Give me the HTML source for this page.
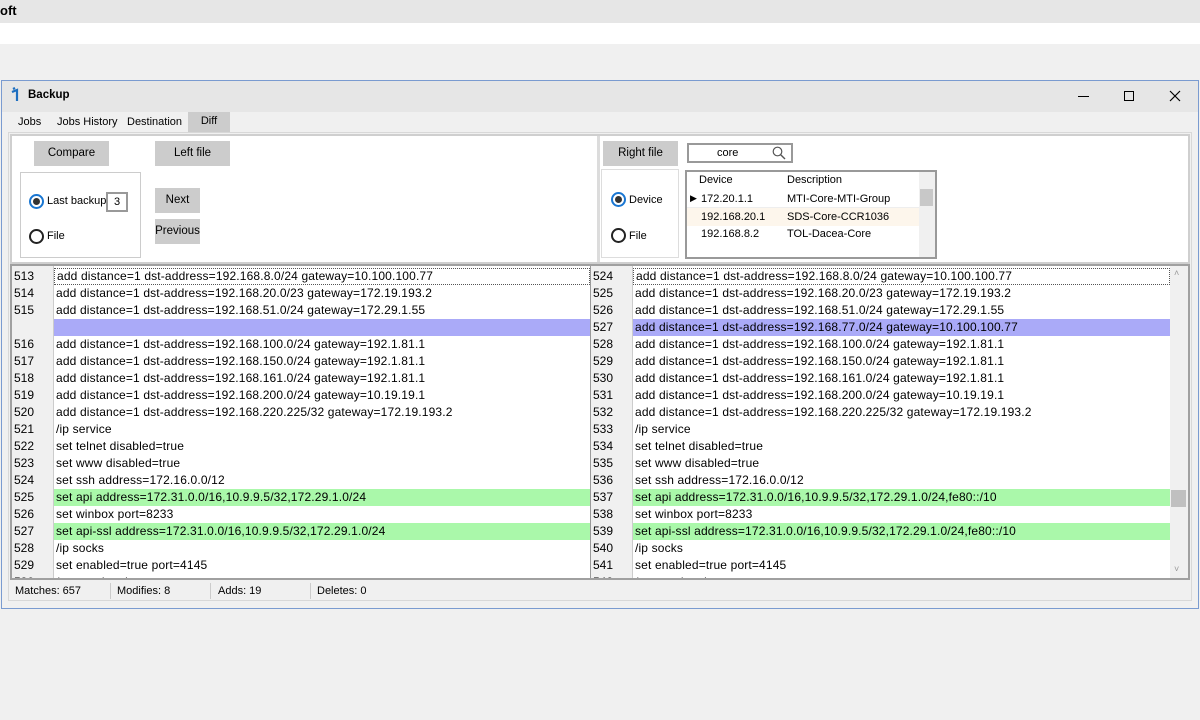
<!DOCTYPE html>
<html><head><meta charset="utf-8"><style>
*{margin:0;padding:0;box-sizing:border-box}
body{width:1200px;height:720px;background:#f0f0f0;font-family:"Liberation Sans",sans-serif;font-size:12px;color:#000;position:relative;overflow:hidden}
.a{position:absolute}
.btn{position:absolute;background:#cccccc;text-align:center;line-height:25px;font-size:11.5px}
.row{position:absolute;height:17px;line-height:17px;white-space:nowrap;letter-spacing:0.15px}
.num{position:absolute;left:0;width:40px;padding-left:2px;letter-spacing:0}
.txt{position:absolute;left:42px;padding-left:2px}
</style></head><body>
<div class="a" style="left:0;top:0;width:1200px;height:23px;background:#e6e6e6;font-weight:bold;font-size:13px;line-height:22px;padding-left:0">oft</div>
<div class="a" style="left:0;top:23px;width:1200px;height:21px;background:#fff"></div>

<div class="a" style="left:1px;top:80px;width:1198px;height:529px;border:1px solid #7a9bd0;background:#f0f0f0"></div>
<div class="a" style="left:2px;top:81px;width:1196px;height:31px;background:#e6e6e6"></div>
<svg class="a" style="left:10px;top:87px" width="14" height="16"><path d="M3 2l2-1M2 5l5-2v11" stroke="#1e6fc0" stroke-width="2.2" fill="none"/></svg>
<div class="a" style="left:28px;top:89px;font-weight:bold;font-size:11.5px">Backup</div>
<div class="a" style="left:1078px;top:96px;width:11px;height:1px;background:#000"></div>
<div class="a" style="left:1124px;top:91px;width:10px;height:10px;border:1px solid #000"></div>
<svg class="a" style="left:1169px;top:90px" width="12" height="12"><path d="M1 1L11 11M11 1L1 11" stroke="#000" stroke-width="1.2"/></svg>

<div class="a" style="left:18px;top:116px;font-size:11px">Jobs</div>
<div class="a" style="left:57px;top:116px;font-size:11px">Jobs History</div>
<div class="a" style="left:127px;top:116px;font-size:11px">Destination</div>
<div class="a" style="left:188px;top:112px;width:42px;height:20px;background:#cccccc;text-align:center;line-height:19px;font-size:11px">Diff</div>

<div class="a" style="left:8px;top:132px;width:1184px;height:469px;border:1px solid #d8d8d8;background:#f0f0f0"></div>
<div class="a" style="left:10px;top:134px;width:1180px;height:130px;border:2px solid #cfcfcf;background:#fff"></div>
<div class="a" style="left:597px;top:136px;width:3px;height:126px;background:#dcdcdc"></div>

<div class="btn" style="left:34px;top:141px;width:75px;height:25px">Compare</div>
<div class="btn" style="left:155px;top:141px;width:75px;height:25px">Left file</div>
<div class="a" style="left:20px;top:172px;width:121px;height:86px;border:1px solid #ccc"></div>
<div class="a" style="left:29px;top:194px;width:15px;height:15px;border:2px solid #1976d2;border-radius:50%"><div style="width:7px;height:7px;background:#333;border-radius:50%;margin:2px"></div></div>
<div class="a" style="left:47px;top:195px;font-size:11px">Last backup</div>
<div class="a" style="left:106px;top:192px;width:22px;height:20px;border:2px solid #999;text-align:center;line-height:16px;font-size:11px">3</div>
<div class="a" style="left:29px;top:229px;width:15px;height:15px;border:2px solid #222;border-radius:50%"></div>
<div class="a" style="left:47px;top:230px;font-size:11px">File</div>
<div class="btn" style="left:155px;top:188px;width:45px;height:25px">Next</div>
<div class="btn" style="left:155px;top:219px;width:45px;height:25px">Previous</div>

<div class="btn" style="left:603px;top:141px;width:75px;height:25px">Right file</div>
<div class="a" style="left:687px;top:143px;width:106px;height:20px;border:2px solid #999;background:#fff;line-height:16px;padding-left:28px;font-size:11px">core</div>
<svg class="a" style="left:772px;top:146px" width="14" height="14"><circle cx="5.5" cy="5.5" r="4.3" stroke="#555" stroke-width="1.2" fill="none"/><path d="M8.7 8.7L13 13" stroke="#555" stroke-width="1.4"/></svg>
<div class="a" style="left:601px;top:169px;width:78px;height:89px;border:1px solid #ddd"></div>
<div class="a" style="left:611px;top:192px;width:15px;height:15px;border:2px solid #1976d2;border-radius:50%"><div style="width:7px;height:7px;background:#333;border-radius:50%;margin:2px"></div></div>
<div class="a" style="left:629px;top:194px;font-size:11px">Device</div>
<div class="a" style="left:611px;top:228px;width:15px;height:15px;border:2px solid #222;border-radius:50%"></div>
<div class="a" style="left:629px;top:230px;font-size:11px">File</div>
<div class="a" style="left:685px;top:170px;width:252px;height:89px;border:2px solid #999;background:#fff;font-size:11px">
 <div class="a" style="left:12px;top:2px">Device</div><div class="a" style="left:100px;top:2px">Description</div>
 <div class="a" style="left:0;top:18px;width:232px;height:18px;border-bottom:1px solid #eee"></div>
 <div class="a" style="left:3px;top:21px;font-size:9px">&#9654;</div>
 <div class="a" style="left:14px;top:21px">172.20.1.1</div><div class="a" style="left:100px;top:21px">MTI-Core-MTI-Group</div>
 <div class="a" style="left:0;top:36px;width:232px;height:18px;background:#fdf6ec"></div>
 <div class="a" style="left:14px;top:39px">192.168.20.1</div><div class="a" style="left:100px;top:39px">SDS-Core-CCR1036</div>
 <div class="a" style="left:14px;top:56px">192.168.8.2</div><div class="a" style="left:100px;top:56px">TOL-Dacea-Core</div>
 <div class="a" style="left:232px;top:0;width:16px;height:85px;background:#f0f0f0"></div>
 <div class="a" style="left:233px;top:17px;width:13px;height:17px;background:#c8c8c8"></div>
</div>

<div class="a" style="left:10px;top:264px;width:1180px;height:316px;border:2px solid #a0a0a0;background:#fff;overflow:hidden">
<div class="a" style="left:0;top:0;width:42px;height:314px;background:#f0f0f0;border-right:1px solid #ccc"></div>
<div class="a" style="left:578px;top:0;width:1px;height:314px;background:#999"></div>
<div class="a" style="left:579px;top:0;width:42px;height:314px;background:#f0f0f0;border-right:1px solid #ccc"></div>
<div class="a" style="left:1158px;top:0;width:18px;height:314px;background:#f0f0f0"></div>
<div class="a" style="left:1159px;top:224px;width:15px;height:17px;background:#c0c0c0"></div>
<div class="a" style="left:1162px;top:2px;font-size:9px;color:#999">&#708;</div>
<div class="a" style="left:1162px;top:298px;font-size:9px;color:#999">&#709;</div>
<div id="L" class="a" style="left:0;top:0;width:578px;height:314px"></div>
<div id="R" class="a" style="left:579px;top:0;width:579px;height:314px"></div>
</div>

<div class="a" style="left:15px;top:585px;font-size:11px">Matches: 657</div>
<div class="a" style="left:110px;top:583px;width:1px;height:16px;background:#ccc"></div>
<div class="a" style="left:117px;top:585px;font-size:11px">Modifies: 8</div>
<div class="a" style="left:210px;top:583px;width:1px;height:16px;background:#ccc"></div>
<div class="a" style="left:218px;top:585px;font-size:11px">Adds: 19</div>
<div class="a" style="left:310px;top:583px;width:1px;height:16px;background:#ccc"></div>
<div class="a" style="left:317px;top:585px;font-size:11px">Deletes: 0</div>

<script>
var L=[["513","add distance=1 dst-address=192.168.8.0/24 gateway=10.100.100.77",""],["514","add distance=1 dst-address=192.168.20.0/23 gateway=172.19.193.2",""],["515","add distance=1 dst-address=192.168.51.0/24 gateway=172.29.1.55",""],["","","#aaaaf8"],["516","add distance=1 dst-address=192.168.100.0/24 gateway=192.1.81.1",""],["517","add distance=1 dst-address=192.168.150.0/24 gateway=192.1.81.1",""],["518","add distance=1 dst-address=192.168.161.0/24 gateway=192.1.81.1",""],["519","add distance=1 dst-address=192.168.200.0/24 gateway=10.19.19.1",""],["520","add distance=1 dst-address=192.168.220.225/32 gateway=172.19.193.2",""],["521","/ip service",""],["522","set telnet disabled=true",""],["523","set www disabled=true",""],["524","set ssh address=172.16.0.0/12",""],["525","set api address=172.31.0.0/16,10.9.9.5/32,172.29.1.0/24","#aaf8aa"],["526","set winbox port=8233",""],["527","set api-ssl address=172.31.0.0/16,10.9.9.5/32,172.29.1.0/24","#aaf8aa"],["528","/ip socks",""],["529","set enabled=true port=4145",""],["530","/system logging",""]];
var R=[["524","add distance=1 dst-address=192.168.8.0/24 gateway=10.100.100.77",""],["525","add distance=1 dst-address=192.168.20.0/23 gateway=172.19.193.2",""],["526","add distance=1 dst-address=192.168.51.0/24 gateway=172.29.1.55",""],["527","add distance=1 dst-address=192.168.77.0/24 gateway=10.100.100.77","#aaaaf8"],["528","add distance=1 dst-address=192.168.100.0/24 gateway=192.1.81.1",""],["529","add distance=1 dst-address=192.168.150.0/24 gateway=192.1.81.1",""],["530","add distance=1 dst-address=192.168.161.0/24 gateway=192.1.81.1",""],["531","add distance=1 dst-address=192.168.200.0/24 gateway=10.19.19.1",""],["532","add distance=1 dst-address=192.168.220.225/32 gateway=172.19.193.2",""],["533","/ip service",""],["534","set telnet disabled=true",""],["535","set www disabled=true",""],["536","set ssh address=172.16.0.0/12",""],["537","set api address=172.31.0.0/16,10.9.9.5/32,172.29.1.0/24,fe80::/10","#aaf8aa"],["538","set winbox port=8233",""],["539","set api-ssl address=172.31.0.0/16,10.9.9.5/32,172.29.1.0/24,fe80::/10","#aaf8aa"],["540","/ip socks",""],["541","set enabled=true port=4145",""],["542","/system logging",""]];
function f(id,d,w){var h="";d.forEach(function(r,i){var t=2+i*17;h+='<div class="row" style="top:'+t+'px;left:0;width:'+w+'px"><div class="num">'+r[0]+'</div><div class="txt" style="width:'+(w-42)+'px;height:17px;'+(r[2]?'background:'+r[2]:'')+(i==0?';border:1px dotted #555;line-height:15px':'')+'">'+r[1]+'</div></div>';});document.getElementById(id).innerHTML=h;}
f("L",L,578);f("R",R,579);
</script>
</body></html>
